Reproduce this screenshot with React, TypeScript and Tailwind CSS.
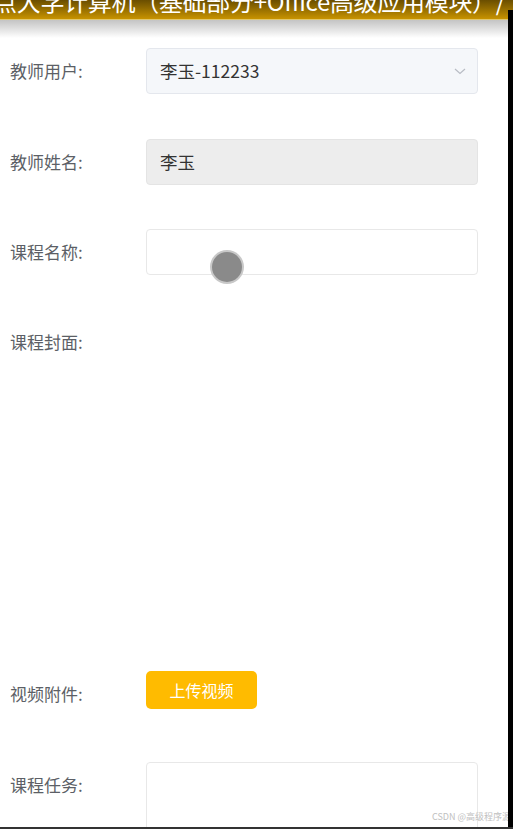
import React from "react";

const font = { fontFamily: '"Microsoft YaHei", "Noto Sans CJK SC", "Noto Sans", sans-serif' };

function Label({ children }: { children: React.ReactNode }) {
  return (
    <div className="w-[136px] shrink-0 text-[17px] leading-[46px] text-[#5c5f66]">{children}</div>
  );
}

export default function App() {
  return (
    <div className="relative h-[829px] w-[513px] overflow-hidden bg-white" style={font}>
      {/* header */}
      <div className="h-[20px] overflow-hidden bg-gradient-to-b from-[#6a4e00] to-[#c89300] border-b border-[#e0c870]">
        <div className="-mt-[14px] -ml-[7px] whitespace-nowrap text-[24px] leading-[30px] tracking-[-0.3px] text-white">
          点大学计算机（基础部分+Office高级应用模块）/
        </div>
      </div>
      <div className="h-[18px] bg-gradient-to-b from-[#c4c4c4] to-white" />

      {/* form */}
      <div className="pl-[10px] pt-[10px]">
        <div className="mb-[45px] flex h-[46px] items-center">
          <Label>教师用户:</Label>
          <div className="flex h-[46px] w-[332px] items-center justify-between rounded-[4px] border border-[#e4e7ed] bg-[#f5f7fa] pl-[13px] pr-[10px] text-[17.5px] text-[#333]">
            <span>李玉-112233</span>
            <svg width="14" height="14" viewBox="0 0 14 14" fill="none">
              <path d="M2 5l5 4.5L12 5" stroke="#b8bcc4" strokeWidth="1.2" />
            </svg>
          </div>
        </div>

        <div className="mb-[44px] flex h-[46px] items-center">
          <Label>教师姓名:</Label>
          <div className="flex h-[46px] w-[332px] items-center rounded-[4px] border border-[#e4e4e4] bg-[#ededed] pl-[13px] text-[17.5px] text-[#333]">
            李玉
          </div>
        </div>

        <div className="mb-[44px] flex h-[46px] items-center">
          <Label>课程名称:</Label>
          <div className="relative h-[46px] w-[332px] rounded-[4px] border border-[#e8e8e8] bg-white">
            <div className="absolute left-[65px] top-[22px] h-[30px] w-[30px] rounded-full bg-[#8a8a8a] ring-2 ring-[#c8c8c8]" />
          </div>
        </div>

        <div className="mb-[45px] flex h-[307px] items-start">
          <Label>课程封面:</Label>
        </div>

        <div className="mb-[45px] flex h-[46px] items-start">
          <Label>视频附件:</Label>
          <button className="h-[38px] w-[111px] rounded-[5px] bg-[#ffbb00] text-[16px] text-white">上传视频</button>
        </div>

        <div className="flex items-start">
          <div className="w-[136px] shrink-0 text-[17px] leading-[46px] text-[#5c5f66]">课程任务:</div>
          <div className="h-[80px] w-[332px] rounded-[4px] border border-[#e8e8e8] bg-white" />
        </div>
      </div>

      {/* watermark */}
      <div className="absolute right-[2px] bottom-[6px] text-[9px] text-[#c0c0c0]">CSDN @高级程序源</div>
      {/* right black strip */}
      <div className="absolute right-0 top-[10px] h-[819px] w-[5px] bg-black" />
      {/* bottom dark line */}
      <div className="absolute bottom-0 left-0 h-[2px] w-full bg-[#333]" />
    </div>
  );
}
